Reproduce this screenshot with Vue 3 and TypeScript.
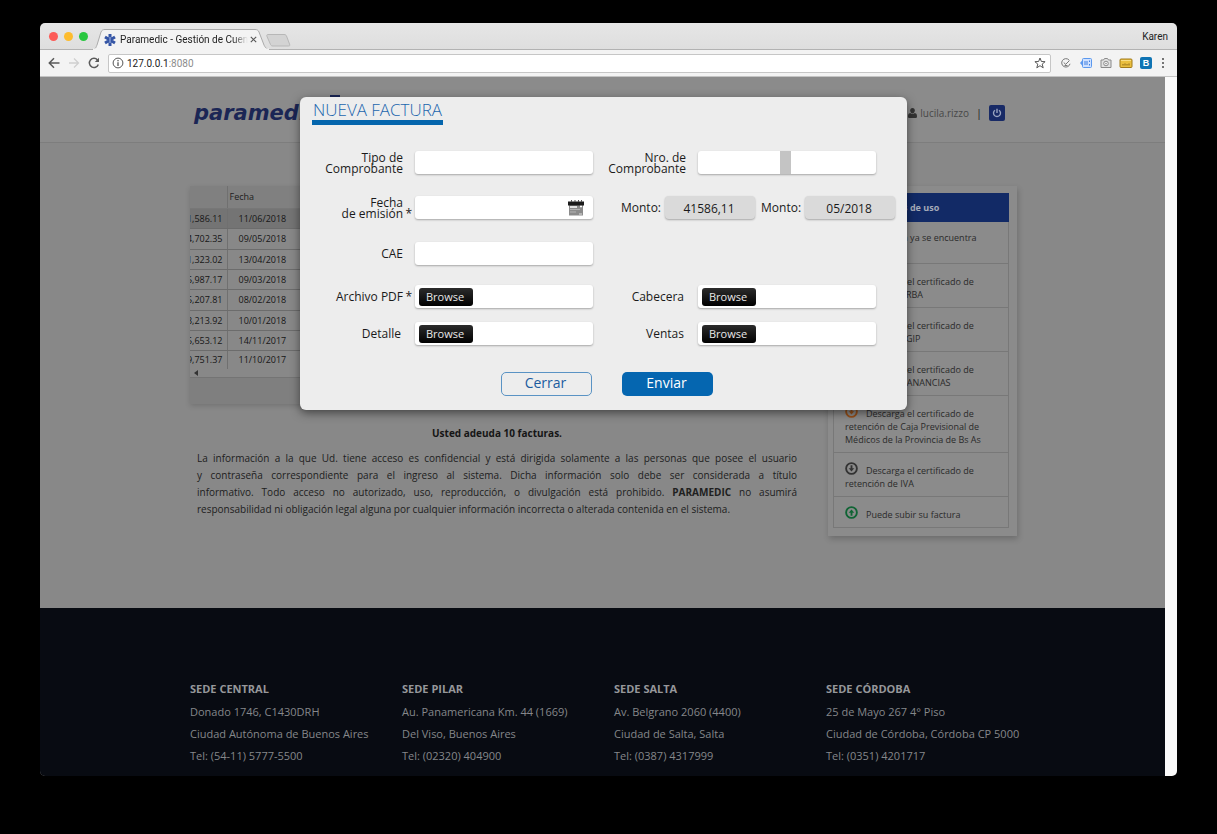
<script setup lang="ts">
import { ref } from 'vue'

interface Invoice {
  amount: string
  date: string
}
interface Notice {
  icon: 'down' | 'up'
  tone: string
  text: string
}
interface Office {
  name: string
  lines: string[]
}

const invoices: Invoice[] = [
  { amount: '1,586.11', date: '11/06/2018' },
  { amount: '4,702.35', date: '09/05/2018' },
  { amount: '1,323.02', date: '13/04/2018' },
  { amount: '5,987.17', date: '09/03/2018' },
  { amount: '5,207.81', date: '08/02/2018' },
  { amount: '3,213.92', date: '10/01/2018' },
  { amount: '5,653.12', date: '14/11/2017' },
  { amount: '9,751.37', date: '11/10/2017' },
]

const notices: Notice[] = [
  { icon: 'down', tone: 'dark', text: 'La factura ya se encuentra cargada' },
  { icon: 'down', tone: 'dark', text: 'Descarga el certificado de retención de ARBA' },
  { icon: 'down', tone: 'dark', text: 'Descarga el certificado de retención de AGIP' },
  { icon: 'down', tone: 'dark', text: 'Descarga el certificado de retención de GANANCIAS' },
  { icon: 'down', tone: 'orange', text: 'Descarga el certificado de retención de Caja Previsional de Médicos de la Provincia de Bs As' },
  { icon: 'down', tone: 'dark', text: 'Descarga el certificado de retención de IVA' },
  { icon: 'up', tone: 'leaf', text: 'Puede subir su factura' },
]

const offices: Office[] = [
  { name: 'SEDE CENTRAL', lines: ['Donado 1746, C1430DRH', 'Ciudad Autónoma de Buenos Aires', 'Tel: (54-11) 5777-5500'] },
  { name: 'SEDE PILAR', lines: ['Au. Panamericana Km. 44 (1669)', 'Del Viso, Buenos Aires', 'Tel: (02320) 404900'] },
  { name: 'SEDE SALTA', lines: ['Av. Belgrano 2060 (4400)', 'Ciudad de Salta, Salta', 'Tel: (0387) 4317999'] },
  { name: 'SEDE CÓRDOBA', lines: ['25 de Mayo 267 4° Piso', 'Ciudad de Córdoba, Córdoba CP 5000', 'Tel: (0351) 4201717'] },
]

const tipo = ref('')
const puntoVenta = ref('')
const numero = ref('')
const fecha = ref('')
const cae = ref('')
const monto = ref('41586,11')
const periodo = ref('05/2018')
</script>

<template>
  <div class="desktop">
    <div class="window">
      <div class="tabstrip">
        <div class="lights"><i class="red"></i><i class="yellow"></i><i class="green"></i></div>
        <div class="tab">
          <svg class="tab-shape" viewBox="0 0 178 21" preserveAspectRatio="none" aria-hidden="true">
            <path d="M0 21C4 20 4 18 5 16L9 3C10 1 11 .5 13 .5H163C165 .5 166 1 167 3L172 16C173 18 174 20 178 21Z" fill="#f3f3f3" stroke="#aaa" />
            <path d="M1 20.5H177" stroke="#f3f3f3" stroke-width="2" />
          </svg>
          <svg class="favicon" viewBox="0 0 12 12" aria-hidden="true">
            <g stroke="#3555a5" stroke-width="3">
              <path d="M6 0V12M1 3L11 9M11 3L1 9" />
            </g>
            <path d="M6 3V9" stroke="#a9bde6" stroke-width="1" />
          </svg>
          <span class="tab-title">Paramedic - Gestión de Cuentas</span>
          <button class="tab-close" aria-label="Cerrar pestaña">
            <svg viewBox="0 0 7 7"><path d="M.8 .8L6.2 6.2M6.2 .8L.8 6.2" stroke="#555" stroke-width="1.1" /></svg>
          </button>
        </div>
        <button class="new-tab" aria-label="Nueva pestaña">
          <svg viewBox="0 0 25 13"><path d="M2 .5H18C19.500 .5 20 1 20.500 2L23.500 10C24 11.500 24 12 22.500 12H7C5.500 12 5 11.500 4.500 10.500L1 2.500C.5 1 1 .5 2 .5Z" fill="#d3d3d3" stroke="#b7b7b7" /></svg>
        </button>
        <span class="profile">Karen</span>
      </div>

      <div class="toolbar">
        <button class="nav" aria-label="Atrás">
          <svg viewBox="0 0 12 12" fill="none" stroke="#5a5a5a" stroke-width="1.500"><path d="M11.500 6H1.500M6 1.300L1.300 6L6 10.700" /></svg>
        </button>
        <button class="nav" aria-label="Adelante">
          <svg viewBox="0 0 12 12" fill="none" stroke="#cfcfcf" stroke-width="1.300"><path d="M1 6H10.500M6 1.500L10.500 6L6 10.500" /></svg>
        </button>
        <button class="nav" aria-label="Recargar">
          <svg viewBox="0 0 12 12" fill="none" stroke="#5a5a5a" stroke-width="1.500"><path d="M10.300 7.500A4.600 4.600 0 1 1 9.500 2.900" /><path d="M11 .8V5H6.800Z" fill="#5a5a5a" stroke="none" /></svg>
        </button>
        <div class="address">
          <svg class="info" viewBox="0 0 12 12" fill="none" stroke="#555"><circle cx="6" cy="6" r="4.900" /><path d="M6 5.300V9M6 3V4.300" stroke-width="1.300" /></svg>
          <span class="url">127.0.0.1<span class="port">:8080</span></span>
          <svg class="star" viewBox="0 0 12 12" fill="none" stroke="#555"><path d="M6 1L7.400 4.500L11.100 4.700L8.200 7.100L9.200 10.800L6 8.700L2.800 10.800L3.800 7.100L.9 4.700L4.600 4.500Z" /></svg>
        </div>
        <div class="extensions">
          <svg viewBox="0 0 14 12" fill="none" stroke="#777"><path d="M10 3A4.200 4.200 0 1 0 11 6.800M5 5.500L6.500 7.500L10.500 3.500M5.500 8.500H8.500" /></svg>
          <svg viewBox="0 0 14 12"><path d="M1 6L4 2.500V9.500Z" fill="#5b98ee" /><rect x="3.500" y="1.500" width="9" height="9" rx="1" fill="#cfe1ff" stroke="#5b98ee" /><path d="M6 4V8M8 4V8M10.500 3.500V5M10.500 7V8.500" stroke="#3f7fe0" /></svg>
          <svg viewBox="0 0 14 12"><path d="M2 3H4.500L5.500 1.500H8.500L9.500 3H12V10.500H2Z" fill="#e2e2e2" stroke="#8a8a8a" /><circle cx="7" cy="6.500" r="2.300" fill="#f3f3f3" stroke="#8a8a8a" /><circle cx="7" cy="6.500" r=".8" fill="#888" /></svg>
          <svg viewBox="0 0 14 12"><rect x="1" y="2" width="12" height="8.500" rx="1" fill="#eabf3f" stroke="#a07a1c" /><path d="M4 8.500V7M6 8.500V6.500M8 8.500V7M10 8.500V6.500" stroke="#8a6614" /><path d="M2 3.500H12" stroke="#f8de87" /></svg>
          <span class="ext-b">B</span>
          <svg viewBox="0 0 14 12" fill="#555"><circle cx="7" cy="2" r="1.100" /><circle cx="7" cy="6" r="1.100" /><circle cx="7" cy="10" r="1.100" /></svg>
        </div>
      </div>

      <div class="viewport">
        <div class="page">
          <header class="site-header">
            <div class="brand">
              <span>paramedic</span>
              <i class="brand-mark"></i>
            </div>
            <div class="user">
              <svg class="person" viewBox="0 0 9 10" fill="#333"><path d="M4.500 0C6 0 6.800 1 6.800 2.500S5.800 5.500 4.500 5.500S2.200 4 2.200 2.500S3 0 4.500 0Z" /><path d="M2.200 5C3.500 6.300 5.500 6.300 6.800 5C8.500 5.300 9 6.500 9 8.500C9 9.500 8.300 10 7.500 10H1.500C.7 10 0 9.500 0 8.500C0 6.500 .5 5.300 2.200 5Z" /></svg>
              <span class="user-name">lucila.rizzo</span>
              <span class="bar">|</span>
              <button class="power" aria-label="Salir">
                <svg viewBox="0 0 10 10" fill="none" stroke="#9aa4bf" stroke-width="1.400"><path d="M3 2.200A3.500 3.500 0 1 0 7 2.200M5 .8V5" /></svg>
              </button>
            </div>
          </header>

          <main class="main">
            <section class="left">
              <div class="grid-card">
                <table>
                  <thead>
                    <tr><th class="amount"></th><th class="date">Fecha</th><th></th></tr>
                  </thead>
                  <tbody>
                    <tr v-for="row in invoices" :key="row.date">
                      <td class="amount"><div>{{ row.amount }}</div></td>
                      <td class="date">{{ row.date }}</td>
                      <td></td>
                    </tr>
                  </tbody>
                </table>
                <div class="hscroll"><svg viewBox="0 0 4 6"><path d="M4 0V6L0 3Z" fill="#333" /></svg></div>
                <div class="grid-foot"></div>
              </div>
              <p class="debt">Usted adeuda 10 facturas.</p>
              <p class="legal">
                <span>La información a la que Ud. tiene acceso es confidencial y está dirigida solamente a las personas que posee el usuario</span>
                <span>y contraseña correspondiente para el ingreso al sistema. Dicha información solo debe ser considerada a título</span>
                <span>informativo. Todo acceso no autorizado, uso, reproducción, o divulgación está prohibido. <b>PARAMEDIC</b> no asumirá</span>
                <span>responsabilidad ni obligación legal alguna por cualquier información incorrecta o alterada contenida en el sistema.</span>
              </p>
            </section>

            <aside class="side">
              <h2>Instrucciones de uso</h2>
              <ul>
                <li v-for="n in notices" :key="n.text">
                  <svg :class="['notice-icon', n.tone]" viewBox="0 0 14 14" fill="none" stroke="currentColor" stroke-width="2">
                    <circle cx="7" cy="7" r="5.800" />
                    <path v-if="n.icon === 'down'" d="M7 3.500V7.500" />
                    <path v-else d="M7 10.500V6.500" />
                    <path :d="n.icon === 'down' ? 'M4 6.800H10L7 10.300Z' : 'M4 7.200H10L7 3.700Z'" fill="currentColor" stroke="none" />
                  </svg>{{ n.text }}
                </li>
              </ul>
            </aside>
          </main>

          <footer class="footer">
            <section v-for="o in offices" :key="o.name">
              <h3>{{ o.name }}</h3>
              <p v-for="line in o.lines" :key="line">{{ line }}</p>
            </section>
          </footer>

          <div class="overlay">
            <form class="modal" role="dialog" aria-labelledby="modal-title" @submit.prevent>
              <h1 id="modal-title">NUEVA FACTURA</h1>

              <div class="row">
                <div class="field">
                  <label for="tipo"><span>Tipo de<br />Comprobante</span><span class="mark"></span></label>
                  <input id="tipo" v-model="tipo" class="box" type="text" />
                </div>
                <div class="field">
                  <label for="numero"><span>Nro. de<br />Comprobante</span><span class="mark"></span></label>
                  <div class="box split">
                    <input v-model="puntoVenta" class="prefix" type="text" aria-label="Punto de venta" />
                    <i></i>
                    <input id="numero" v-model="numero" type="text" />
                  </div>
                </div>
              </div>

              <div class="row row-date">
                <div class="field">
                  <label for="fecha"><span>Fecha<br />de emisión</span><span class="mark">*</span></label>
                  <div class="box with-icon">
                    <input id="fecha" v-model="fecha" type="text" />
                    <button type="button" aria-label="Elegir fecha">
                      <svg viewBox="0 0 16 16"><path d="M1 2H15V15.500H1Z" fill="#8b8b8b" /><path d="M0 1.500H16V5.500H0Z" fill="#1b1b1b" /><path d="M3.500 0V2M7 0V2M10.500 0V2M13.500 0V2" stroke="#555" /><path d="M2 7H9M12 6.500H14" stroke="#fff" stroke-width="1.400" /><path d="M2 9.500H12M2 12H8" stroke="#b4b4b4" /><path d="M11 14H14" stroke="#ddd" /></svg>
                    </button>
                  </div>
                </div>
                <div class="amounts">
                  <label for="monto">Monto:</label>
                  <input id="monto" v-model="monto" class="readonly" type="text" readonly />
                  <label for="periodo" class="second">Monto:</label>
                  <input id="periodo" v-model="periodo" class="readonly" type="text" readonly />
                </div>
              </div>

              <div class="row row-cae">
                <div class="field">
                  <label for="cae"><span>CAE</span><span class="mark"></span></label>
                  <input id="cae" v-model="cae" class="box" type="text" />
                </div>
              </div>

              <div class="row row-files">
                <div class="field">
                  <label for="pdf"><span>Archivo PDF</span><span class="mark">*</span></label>
                  <div class="box file"><button id="pdf" type="button">Browse</button></div>
                </div>
                <div class="field">
                  <label for="cabecera"><span>Cabecera</span><span class="mark wide"></span></label>
                  <div class="box file"><button id="cabecera" type="button">Browse</button></div>
                </div>
              </div>

              <div class="row row-detail">
                <div class="field">
                  <label for="detalle"><span>Detalle</span><span class="mark wide"></span></label>
                  <div class="box file"><button id="detalle" type="button">Browse</button></div>
                </div>
                <div class="field">
                  <label for="ventas"><span>Ventas</span><span class="mark wide"></span></label>
                  <div class="box file"><button id="ventas" type="button">Browse</button></div>
                </div>
              </div>

              <div class="actions">
                <button type="button" class="close">Cerrar</button>
                <button type="submit" class="send">Enviar</button>
              </div>
            </form>
          </div>
        </div>
        <div class="scrollbar"></div>
      </div>
    </div>
  </div>
</template>

<style>
body {
  margin: 0;
  background: #000;
}
</style>

<style scoped>
* {
  box-sizing: border-box;
}
button,
input {
  margin: 0;
  padding: 0;
  border: 0;
  background: none;
  font: inherit;
  color: inherit;
  outline: none;
}
svg {
  display: block;
}
.desktop {
  min-height: 100vh;
  padding: 23px 40px 58px;
  background: #000;
  font-family: "Open Sans", "Noto Sans", sans-serif;
  font-size: 11px;
  color: #202020;
}
.window {
  border-radius: 5px;
  overflow: hidden;
}

/* browser chrome */
.tabstrip {
  display: flex;
  align-items: flex-end;
  height: 27px;
  padding-right: 9px;
  background: linear-gradient(#e6e6e6, #dedede);
  border-bottom: 1px solid #b2b2b2;
  font-family: Roboto, sans-serif;
  font-size: 10px;
}
.lights {
  display: flex;
  gap: 6px;
  align-self: center;
  width: 52px;
  padding-left: 9px;
}
.lights i {
  width: 9px;
  height: 9px;
  border-radius: 50%;
}
.red {
  background: #fc5b57;
}
.yellow {
  background: #fdbc2e;
}
.green {
  background: #29c740;
}
.tab {
  position: relative;
  display: flex;
  align-items: center;
  width: 178px;
  height: 21px;
  margin-bottom: -1px;
  padding: 0 13px 0 12px;
}
.tab-shape {
  position: absolute;
  inset: 0;
  width: 100%;
  height: 100%;
}
.favicon {
  position: relative;
  width: 12px;
  height: 12px;
  margin-right: 4px;
}
.tab-title {
  position: relative;
  flex: 1;
  overflow: hidden;
  white-space: nowrap;
  color: #222;
  mask-image: linear-gradient(90deg, #000 88%, transparent);
}
.tab-close {
  position: relative;
  width: 7px;
  margin-left: 2px;
}
.new-tab {
  width: 25px;
  margin-bottom: 2px;
  margin-left: -4px;
}
.profile {
  align-self: center;
  margin-left: auto;
  color: #222;
}
.toolbar {
  display: flex;
  align-items: center;
  gap: 8px;
  height: 27px;
  padding: 0 7px 0 8px;
  background: #f3f3f3;
  border-bottom: 1px solid #c4c4c4;
}
.nav {
  width: 12px;
}
.address {
  display: flex;
  flex: 1;
  align-items: center;
  height: 19px;
  padding: 0 4px 0 3px;
  background: #fff;
  border: 1px solid #c6c6c6;
  border-radius: 2px;
  font-family: Roboto, sans-serif;
  font-size: 10px;
  color: #222;
}
.info,
.star {
  width: 12px;
}
.url {
  flex: 1;
  margin-left: 3px;
}
.port {
  color: #8c8c8c;
}
.extensions {
  display: flex;
  align-items: center;
  gap: 6px;
}
.extensions svg {
  width: 14px;
}
.extensions svg:last-child {
  margin-left: -2px;
}
.ext-b {
  width: 12px;
  height: 12px;
  margin-left: 1px;
  border-radius: 2px;
  background: #0f74b4;
  color: #fff;
  font: bold 9px/12px "Liberation Sans", sans-serif;
  text-align: center;
}

/* page */
.viewport {
  display: flex;
}
.page {
  position: relative;
  flex: 1;
  min-width: 0;
  background: #888;
}
.scrollbar {
  width: 12px;
  background: #fafafa;
}
.site-header {
  display: flex;
  align-items: center;
  justify-content: space-between;
  height: 66px;
  padding: 6px 160px 0 154px;
  background: #8b8b8b;
  border-bottom: 1px solid #7d7d7d;
}
.brand {
  position: relative;
  color: #1b2655;
  font: italic bold 21px/24px "DejaVu Sans", sans-serif;
}
.brand-mark {
  position: absolute;
  top: -6px;
  right: -21px;
  width: 10px;
  height: 5px;
  background: #1b2655;
}
.user {
  display: flex;
  align-items: center;
}
.person {
  width: 9px;
  margin-right: 3px;
}
.user-name {
  color: #484848;
  font-size: 10px;
}
.bar {
  margin: 0 7px;
  color: #222;
}
.power {
  display: grid;
  place-items: center;
  width: 16px;
  height: 16px;
  border-radius: 2px;
  background: #182a66;
}
.power svg {
  width: 10px;
}

.main {
  display: flex;
  align-items: flex-start;
  gap: 24px;
  padding: 43px 148px 72px 150px;
}
.left {
  flex: 1;
  min-width: 0;
}
.grid-card {
  background: #888;
  box-shadow: 0 2px 5px rgba(0, 0, 0, 0.15);
}
table {
  width: 100%;
  border-collapse: collapse;
  table-layout: fixed;
}
th {
  height: 22px;
  padding: 0 2px;
  background: #808080;
  border-bottom: 1px solid #777;
  font-size: 9px;
  font-weight: 500;
  text-align: left;
}
th.amount {
  width: 37px;
}
th.date {
  width: 80px;
}
td {
  height: 20px;
  padding: 0;
  border-bottom: 1px solid #6c6c6c;
  font-size: 9px;
  line-height: 15px;
  font-weight: 500;
  color: #161616;
}
tr:nth-child(3n + 2) td {
  height: 21px;
}
tbody tr:first-child td {
  background: #747474;
}
tbody tr:last-child td {
  height: 19px;
  border-bottom: 0;
}
.amount {
  border-right: 1px solid #707070;
}
.amount div {
  display: flex;
  justify-content: flex-end;
  overflow: hidden;
  padding-right: 4px;
}
td.date {
  padding-left: 11px;
}
.hscroll {
  height: 9px;
  padding: 1px 4px;
  border-bottom: 1px solid #747474;
}
.hscroll svg {
  width: 4px;
}
.grid-foot {
  height: 26px;
  background: #7f7f7f;
}
.debt {
  margin: 20px 0 8px;
  font-size: 10px;
  font-weight: bold;
  line-height: 18px;
  text-align: center;
  color: #151515;
}
.legal {
  margin: 0;
  padding: 0 7px;
  font-size: 10px;
  line-height: 17px;
}
.legal span {
  display: block;
  text-align: justify;
}
.legal span:not(:last-child) {
  text-align-last: justify;
}

.side {
  width: 189px;
  padding: 7px 8px 8px 5px;
  background: #8b8b8b;
  box-shadow: 1px 3px 6px rgba(0, 0, 0, 0.2);
}
.side h2 {
  height: 29px;
  margin: 0;
  padding-left: 14px;
  background: #122a66;
  color: #a5abb9;
  font-size: 9px;
  line-height: 29px;
}
.side ul {
  margin: 0;
  padding: 0;
  border: 1px solid #787878;
  border-top: 0;
  list-style: none;
}
.side li {
  padding: 11px 8px 6px 11px;
  border-bottom: 1px solid #787878;
  font-size: 9px;
  line-height: 13px;
  color: #2a2a2a;
}
.side li:first-child {
  padding-top: 9px;
}
.side li:last-child {
  border-bottom: 0;
}
.notice-icon {
  display: inline-block;
  width: 13px;
  height: 13px;
  margin: -5px 8px 0 0;
  vertical-align: -1px;
}
.dark {
  color: #333;
}
.orange {
  color: #96501a;
}
.leaf {
  color: #0f6434;
}

.footer {
  display: grid;
  grid-template-columns: repeat(4, minmax(0, 1fr));
  column-gap: 23px;
  padding: 70px 150px 9px;
  background: #080b12;
  color: #85878a;
  line-height: 22px;
  white-space: nowrap;
}
.footer h3 {
  margin: 0 0 1px;
  font-size: 11px;
  color: #96979a;
}
.footer p {
  margin: 0;
}

/* modal */
.overlay {
  position: absolute;
  inset: 0;
  display: flex;
  align-items: flex-start;
  justify-content: center;
  padding: 20px 0 0 2px;
}
.modal {
  width: 607px;
  padding: 0 12px 14px;
  border-radius: 6px;
  background: #ededed;
  box-shadow: 0 3px 10px rgba(0, 0, 0, 0.5);
  color: #1a1a1a;
  font-size: 12px;
}
h1 {
  width: fit-content;
  margin: 0 0 26px;
  padding: 2px 1px 0;
  border-bottom: 5px solid #0566ad;
  color: #1c66ae;
  font-size: 17px;
  font-weight: 300;
  line-height: 21px;
}
.row {
  display: flex;
  height: 23px;
}
.row-date {
  margin-top: 22px;
}
.row-cae {
  margin-top: 23px;
}
.row-files {
  margin-top: 20px;
}
.row-detail {
  margin-top: 14px;
}
.field {
  display: flex;
  flex-shrink: 0;
  align-items: center;
  width: 281px;
}
.field + .field {
  width: 283px;
}
.field label {
  display: flex;
  flex: 1;
  align-items: flex-end;
  justify-content: flex-end;
  line-height: 11px;
  text-align: right;
  white-space: nowrap;
}
.mark {
  width: 12px;
  padding-right: 3px;
}
.mark.wide {
  width: 14px;
}
.box {
  width: 178px;
  height: 23px;
  padding: 0 4px;
  border-radius: 3px;
  background: #fff;
  box-shadow: 0 1px 2px rgba(0, 0, 0, 0.3);
}
.split {
  display: flex;
  padding: 0;
}
.split input {
  flex: 1;
  min-width: 0;
  padding: 0 4px;
}
.split .prefix {
  flex: none;
  width: 82px;
}
.split i {
  width: 11px;
  background: #c4c4c4;
}
.with-icon {
  display: flex;
  align-items: center;
  padding-right: 9px;
}
.with-icon input {
  flex: 1;
  min-width: 0;
}
.with-icon button {
  width: 16px;
}
.file {
  display: flex;
  align-items: center;
}
.file button {
  width: 54px;
  height: 18px;
  padding: 0 2px 1px 0;
  border-radius: 3px;
  background: linear-gradient(#2c2c2c, #000);
  color: #e8e8e8;
  font-size: 11px;
  line-height: 17px;
}
.amounts {
  display: flex;
  flex-shrink: 0;
  align-items: center;
  gap: 4px;
  margin-left: 28px;
}
.amounts .second {
  margin-left: 2px;
}
.readonly {
  width: 90px;
  height: 23px;
  padding: 2px 2px 0 0;
  border-radius: 4px;
  background: #dadada;
  box-shadow: 0 1px 2px rgba(0, 0, 0, 0.3);
  text-align: center;
}
.actions {
  display: flex;
  justify-content: center;
  gap: 30px;
  margin-top: 27px;
  padding-left: 7px;
}
.actions button {
  width: 91px;
  height: 24px;
  padding: 0 2px 2px 0;
  border-radius: 5px;
  font-size: 14px;
  line-height: 20px;
}
.actions .close {
  border: 1px solid #5a93c4;
  color: #1c5c9f;
}
.actions .send {
  background: #0566b0;
  color: #fff;
}
</style>
